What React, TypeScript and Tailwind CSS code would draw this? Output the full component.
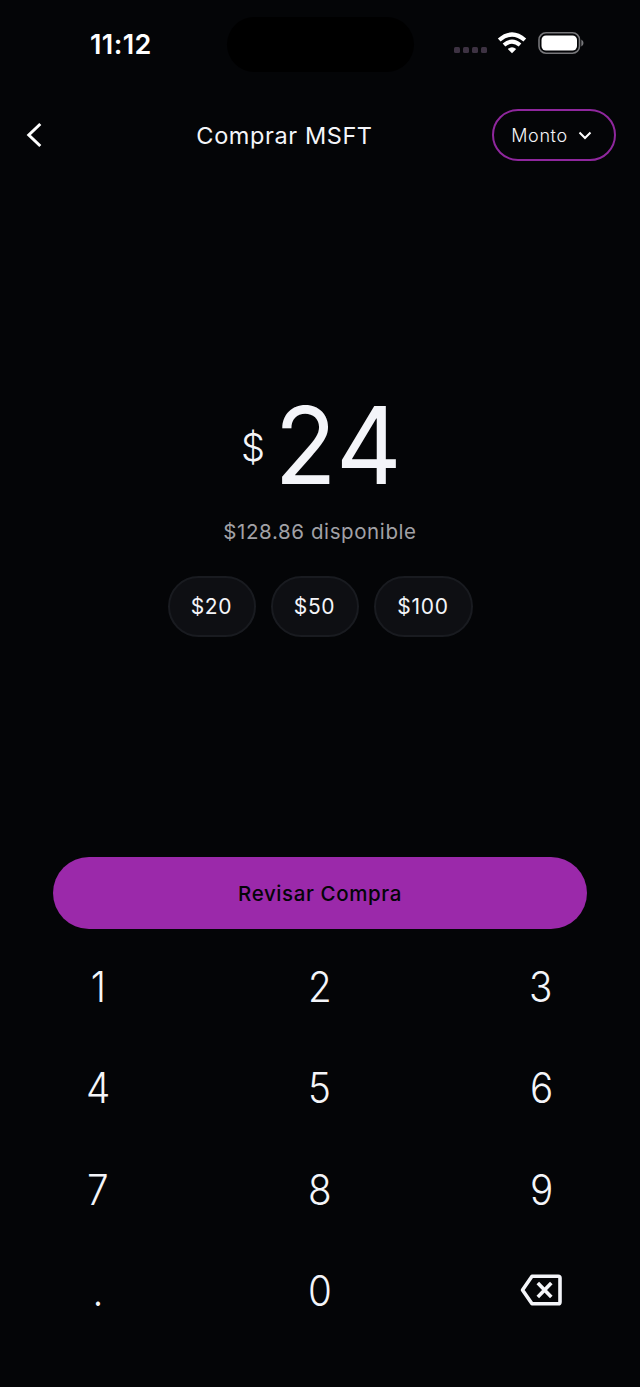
import React from "react";

const keys: string[] = ["1", "2", "3", "4", "5", "6", "7", "8", "9", ".", "0", "back"];

function Backspace() {
  return (
    <svg width="44" height="34" viewBox="0 0 44 34" fill="none" stroke="#f4f5f9" strokeWidth="3.6" strokeLinejoin="round">
      <path d="M13 3.3H39.2Q41 3.3 41 5.1V28.9Q41 30.7 39.2 30.7H13L3.5 17Z" />
      <path d="M18.8 10L32.3 24M32.3 10L18.8 24" />
    </svg>
  );
}

export default function App() {
  return (
    <div className="flex h-[1387px] w-[640px] flex-col overflow-hidden bg-[#040507] font-['Inter',sans-serif] text-[#f4f5f9]">
      <header className="flex h-[88px] shrink-0 items-center">
        <div className="w-[227px] pt-[2px] pl-[90px] text-[27px] font-semibold tracking-[0.4px] text-white">11:12</div>
        <div className="h-[55px] w-[187px] rounded-full bg-black" />
        <div className="ml-[40px] flex items-center pb-[2px]">
          <svg width="34" height="6" className="mt-[14px]" fill="#3d3242">
            <rect width="6" height="6" rx="1.5" />
            <rect x="9" width="6" height="6" rx="1.5" />
            <rect x="18" width="6" height="6" rx="1.5" />
            <rect x="27" width="6" height="6" rx="1.5" />
          </svg>
          <svg width="30" height="22" viewBox="0 0 30 22" className="ml-[9px]" fill="none" stroke="#fff" strokeWidth="4.2">
            <path d="M2.2 8Q15 -3 27.8 8" />
            <path d="M7 13Q15 6.4 23 13" />
            <path d="M15 21.3l-4.2-4.2q4.2-3.6 8.4 0Z" fill="#fff" stroke="none" />
          </svg>
          <svg width="47" height="22" viewBox="0 0 47 22" className="ml-[11px]">
            <rect x="1" y="0.8" width="40.5" height="20.4" rx="7" fill="none" stroke="#77777a" strokeWidth="1.6" />
            <rect x="3.5" y="3.5" width="35.5" height="15" rx="4.5" fill="#fff" />
            <path d="M43.3 7.5q2.2 1 2.2 3.5t-2.2 3.5Z" fill="#77777a" />
          </svg>
        </div>
      </header>
      <nav className="grid h-[94px] shrink-0 grid-cols-[148px_273px_219px] items-center">
        <svg width="18" height="26" viewBox="0 0 18 26" className="ml-[25px]" fill="none" stroke="#fff" strokeWidth="3">
          <path d="M15.3 2L3.8 13L15.3 24" />
        </svg>
        <h1 className="pt-[2px] text-center text-[23.5px] font-normal tracking-[0.6px]">Comprar MSFT</h1>
        <button className="ml-[71px] flex h-[52px] w-[124px] items-center justify-center gap-[10px] rounded-full border-2 border-[#8f279d] pr-[5px] text-[18px] font-light tracking-[0.6px]">
          <span className="pt-px">Monto</span>
          <svg width="14" height="9" viewBox="0 0 14 9" fill="none" stroke="#fff" strokeWidth="2">
            <path d="M1.5 1.5L7 7L12.5 1.5" />
          </svg>
        </button>
      </nav>
      <main className="flex h-[675px] shrink-0 flex-col items-center pt-[206px]">
        <div className="flex h-[114px] items-center gap-[6px]">
          <span className="pl-[2px] pt-[4px] text-[38px] font-light">$</span>
          <span className="-mr-[5px] scale-x-[0.95] text-[107px] font-normal leading-[114px] tracking-[1.2px]">24</span>
        </div>
        <p className="mt-[15px] text-[20.5px] leading-[30px] tracking-[0.6px] text-[#a1a1a6]">$128.86 disponible</p>
        <div className="mt-[29px] flex gap-[15px]">
          <button className="h-[61px] w-[88px] rounded-full border-2 border-[#191b20] bg-[#0e0f13] text-[21px] tracking-[0.7px]">$20</button>
          <button className="h-[61px] w-[88px] rounded-full border-2 border-[#191b20] bg-[#0e0f13] text-[21px] tracking-[0.7px]">$50</button>
          <button className="h-[61px] w-[99px] rounded-full border-2 border-[#191b20] bg-[#0e0f13] text-[21px] tracking-[0.7px]">$100</button>
        </div>
      </main>
      <button className="mx-[53px] h-[72px] shrink-0 rounded-full bg-[#9b29aa] pt-[2px] text-[20.5px] font-medium tracking-[0.6px] text-[#040507]">Revisar Compra</button>
      <section className="-mx-[13px] grid h-[412px] w-[665px] shrink-0 grid-cols-3 grid-rows-4 pt-[7px]">
        {keys.map((key) => (
          <button key={key} aria-label={key} className="flex items-center justify-center text-[42px] font-light">
            {key === "back" ? <Backspace /> : <span className="scale-x-[0.92]">{key}</span>}
          </button>
        ))}
      </section>
    </div>
  );
}
